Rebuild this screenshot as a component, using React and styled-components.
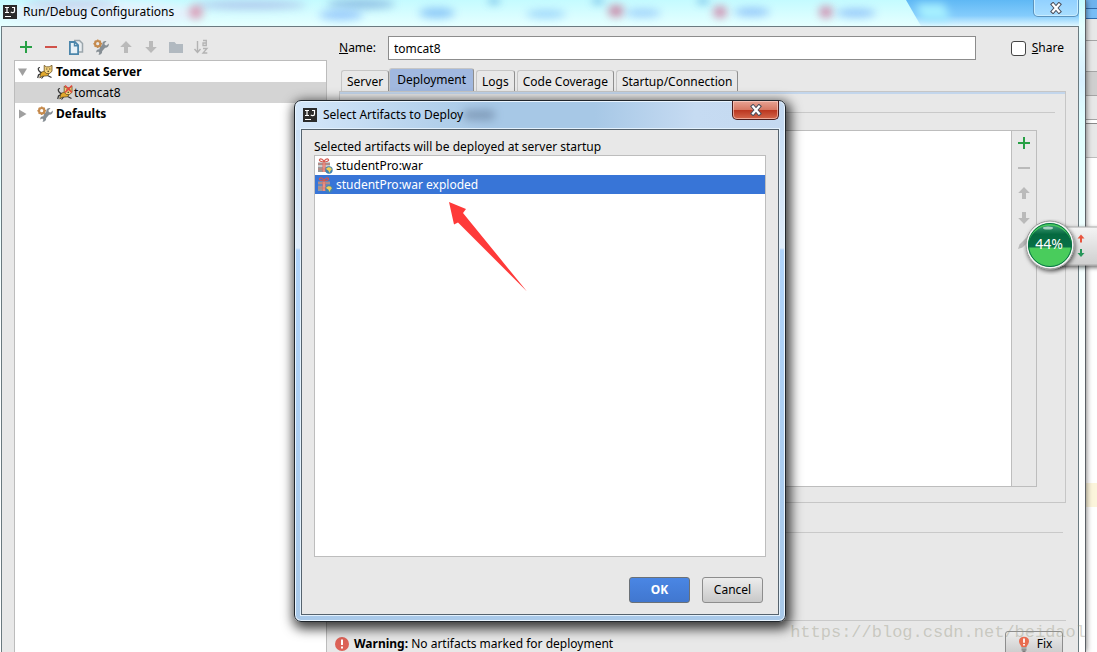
import React from "react";
import styled, { createGlobalStyle } from "styled-components";

const GlobalStyle = createGlobalStyle`
  * { box-sizing: border-box; }
  html, body { margin: 0; height: 100%; }
  #root { height: 100%; }
  body {
    background: #fff;
    color: #000;
    font: 12px/20px "Noto Sans", "Open Sans", sans-serif;
    overflow: hidden;
  }
  button, input { font: inherit; color: inherit; margin: 0; }
  svg { display: block; flex: none; }
  ul { margin: 0; padding: 0; list-style: none; }
`;

/* ---------- desktop and main window ---------- */

const Desktop = styled.div`
  position: relative;
  display: flex;
  height: 100%;
  overflow: hidden;
`;

const MainWindow = styled.div`
  position: relative;
  flex: 1;
  min-width: 0;
  display: flex;
  flex-direction: column;
  padding: 0 6px 0 1px;
  border-right: 1px solid #5c6166;
  background: linear-gradient(#c4fbff 0, #e6ffff 26px, #d8f0ff 80px, #e0ffff 120px, #fbffff 320px, #fff 100%);
  box-shadow: 0 0 6px rgba(0, 0, 0, 0.6);
`;

const BehindWindow = styled.div`
  width: 11px;
  display: flex;
  flex-direction: column;
  background: #fff;
`;

const Band = styled.div`
  height: ${(p) => p.$height}px;
  flex: none;
  background: ${(p) => p.$color};
  border-bottom: 1px solid ${(p) => p.$line || p.$color};
`;

const TitleBar = styled.header`
  position: relative;
  height: 26px;
  flex: none;
  display: flex;
  align-items: flex-start;
  gap: 6px;
  padding: 2px 0 0 2px;
`;

const TitleGlow = styled.svg`
  position: absolute;
  inset: 0;
  width: 100%;
  height: 26px;
`;

const WindowTitle = styled.h1`
  position: relative;
  flex: 1;
  margin: 0;
  font-size: 12px;
  line-height: 20px;
  font-weight: 400;
`;

const LogoSlot = styled.span`
  position: relative;
  padding-top: 3px;
`;

const GlassClose = styled.button`
  position: relative;
  width: 46px;
  height: 18px;
  margin-top: -3px;
  padding: 0;
  display: flex;
  align-items: center;
  justify-content: center;
  border: 1px solid #5c93bd;
  border-top: 0;
  border-radius: 0 0 5px 5px;
  background: linear-gradient(#90d0ff, #a9deff);
  box-shadow: inset 0 0 0 1px #c9edff;
`;

const Client = styled.main`
  flex: 1;
  min-height: 0;
  display: flex;
  border: 1px solid #6b7a80;
  border-bottom: 0;
  background: #e8e8e8;
`;

/* ---------- left column ---------- */

const Sidebar = styled.aside`
  flex: none;
  width: 325px;
  padding: 8px 0 0 12px;
  display: flex;
  flex-direction: column;
  gap: 1px;
`;

const Toolbar = styled.div`
  display: flex;
  flex-direction: ${(p) => (p.$vertical ? "column" : "row")};
  gap: 1px;
`;

const IconButton = styled.button`
  width: 24px;
  height: 24px;
  padding: 0;
  border: 0;
  background: none;
  display: flex;
  align-items: center;
  justify-content: center;
`;

const Tree = styled.ul`
  flex: 1;
  background: #fff;
  border: 1px solid #bcbcbc;
  border-bottom: 0;
`;

const TreeRow = styled.li`
  display: flex;
  align-items: center;
  height: 21px;
  padding-left: ${(p) => (p.$child ? 42 : 2)}px;
  background: ${(p) => (p.$selected ? "#d4d4d4" : "transparent")};
  font-weight: ${(p) => (p.$child ? 400 : 700)};
`;

const Twisty = styled.span`
  width: 20px;
  display: flex;
`;

const TreeLabel = styled.span`
  padding-left: ${(p) => (p.$tight ? 1 : 3)}px;
`;

/* ---------- right column ---------- */

const Editor = styled.section`
  flex: 1;
  min-width: 0;
  display: flex;
  flex-direction: column;
  padding: 9px 12px 0 12px;
`;

const NameRow = styled.div`
  display: flex;
  flex: none;
  align-items: center;
  height: 24px;
  padding-right: 2px;
`;

const NameLabel = styled.label`
  width: 49px;
  flex: none;
`;

const NameInput = styled.input`
  flex: 1;
  min-width: 0;
  height: 24px;
  padding: 0 5px;
  border: 1px solid #8c8c8c;
  background: #fff;
  outline: 0;
  border-radius: 0;
`;

const ShareLabel = styled.label`
  display: flex;
  align-items: center;
  gap: 6px;
  margin-left: 35px;
`;

const Checkbox = styled.input`
  appearance: none;
  width: 15px;
  height: 15px;
  border: 1px solid #444;
  border-radius: 3px;
  background: #fff;
`;

const Tabs = styled.div`
  display: flex;
  flex: none;
  align-items: flex-end;
  gap: 2px;
  height: 31px;
  padding-left: 2px;
`;

const Tab = styled.button`
  height: ${(p) => (p.$active ? 23 : 21)}px;
  padding: ${(p) => (p.$active ? "0 7px" : "2px 5px 0")};
  margin-left: ${(p) => (p.$active ? -2 : 0)}px;
  border: 1px solid #c6c6c6;
  border-bottom: 0;
  border-right: 1px solid #8e8e8e;
  border-radius: 3px 3px 0 0;
  background: ${(p) => (p.$active ? "#a1b8df" : "#e8e8e8")};
  line-height: 18px;
  white-space: nowrap;
`;

const TabPanel = styled.div`
  height: 412px;
  padding: 20px 10px 0 12px;
  border: 1px solid #c6c6c6;
  box-shadow: inset 0 2px 0 #c3d6ec;
  display: flex;
  flex: none;
  flex-direction: column;
  gap: 17px;
`;

const Rule = styled.div`
  height: 1px;
  flex: none;
  background: #c9c9c9;
  margin-top: ${(p) => p.$top || 0}px;
  margin-right: ${(p) => p.$right || 0}px;
`;

const DeployBox = styled.div`
  display: flex;
  height: 357px;
  flex: none;
  margin-right: 18px;
  border: 1px solid #bdbdbd;
`;

const DeployList = styled.div`
  flex: 1;
  background: #fff;
  border-right: 1px solid #bdbdbd;
`;

const StatusRow = styled.footer`
  display: flex;
  flex: none;
  align-items: flex-start;
  gap: 4px;
  padding: 10px 3px 0 0;
`;

const StatusText = styled.span`
  flex: 1;
  line-height: 26px;
`;

const StatusIcon = styled.span`
  padding-top: 5px;
  margin-left: -5px;
`;

const PushButton = styled.button`
  min-width: ${(p) => p.$width || 61}px;
  height: 26px;
  padding: 0;
  display: flex;
  align-items: center;
  justify-content: center;
  gap: 5px;
  border: 1px solid ${(p) => (p.$primary ? "#6b7177" : "#8d8d8d")};
  border-radius: 3px;
  background: ${(p) => (p.$primary ? "linear-gradient(#4a86e4, #4177cf)" : "linear-gradient(#ececec, #c8c8c8)")};
  color: ${(p) => (p.$primary ? "#fff" : "#000")};
  font-weight: ${(p) => (p.$primary ? 700 : 400)};
`;

/* ---------- modal dialog ---------- */

const Dialog = styled.div`
  position: absolute;
  top: 100px;
  left: 294px;
  width: 492px;
  padding: 0 6px 6px;
  border: 1px solid #20262c;
  border-radius: 7px;
  background:
    linear-gradient(90deg, rgba(214, 232, 250, 0.9) 0, #a7c8e6 190px, #a7c8e6 300px, #c6dbf2 400px, #c4d9f0) 0 0 / 100% 29px no-repeat,
    linear-gradient(#c5dcf4 0, #e0edfb 147px, #b0d4fb 149px, #a9c9e9 100%);
  box-shadow: inset 0 0 0 1px #eaf5ff, 2px 4px 12px 3px rgba(0, 0, 0, 0.75);
`;

const DialogTitle = styled.header`
  display: flex;
  align-items: flex-start;
  gap: 6px;
  height: 28px;
  padding: 4px 0 0 2px;
`;

const TitleSmudge = styled.span`
  position: absolute;
  top: 9px;
  left: 168px;
  width: 32px;
  height: 10px;
  border-radius: 5px;
  background: rgba(70, 90, 120, 0.4);
  filter: blur(4px);
`;

const RedClose = styled.button`
  width: 47px;
  height: 19px;
  margin-top: -4px;
  padding: 0;
  display: flex;
  align-items: center;
  justify-content: center;
  border: 1px solid #4b1c1c;
  border-top: 0;
  border-radius: 0 0 5px 5px;
  background: linear-gradient(#e7a394 0, #d77964 48%, #bb3720 52%, #d4674c 100%);
  box-shadow: inset 0 0 0 1px rgba(255, 215, 205, 0.6);
`;

const DialogBody = styled.div`
  padding: 9px 12px 11px;
  border: 1px solid #56636e;
  background: #e8e8e8;
  box-shadow: 0 0 0 1px #e3f1fd;
`;

const DialogHint = styled.p`
  margin: 0;
  line-height: 16px;
`;

const ArtifactList = styled.ul`
  height: 402px;
  border: 1px solid #bdbdbd;
  background: #fff;
`;

const Artifact = styled.li`
  display: flex;
  align-items: center;
  gap: 3px;
  height: 19px;
  padding-left: 2px;
  background: ${(p) => (p.$selected ? "#3875d7" : "transparent")};
  color: ${(p) => (p.$selected ? "#fff" : "#000")};
`;

const DialogActions = styled.div`
  display: flex;
  justify-content: flex-end;
  gap: 12px;
  padding: 20px 3px 0 0;
`;

/* ---------- overlays ---------- */

const PointerArrow = styled.svg`
  position: absolute;
  top: 200px;
  left: 446px;
`;

const SpeedWidget = styled.div`
  position: absolute;
  top: 219px;
  right: 0;
`;

const WidgetText = styled.span`
  position: absolute;
  top: 15px;
  left: 4px;
  width: 44px;
  text-align: center;
  color: #fff;
  font-size: 14px;
`;

const Watermark = styled.div`
  position: absolute;
  top: 622px;
  right: 11px;
  color: rgba(150, 150, 130, 0.4);
  font: 17px/22px "Liberation Mono", monospace;
`;

/* ---------- icons ---------- */

const IdeaLogo = () => (
  <svg width="14" height="14" viewBox="0 0 14 14">
    <rect width="14" height="14" fill="#2b2b2b" />
    <path d="M2 2.500h4M4 2.500v5M2 7.500h4" fill="none" stroke="#fff" strokeWidth="1.200" />
    <path d="M9 2.500h2.500v3.500q0 1.700-1.700 1.700-1.200 0-2-.9" fill="none" stroke="#fff" strokeWidth="1.200" />
    <path d="M2 11.500h6" stroke="#fff" />
  </svg>
);

const Svg16 = ({ children }) => (
  <svg width="16" height="16" viewBox="0 0 16 16">{children}</svg>
);

const PlusIcon = () => (
  <Svg16><path d="M8 2v12M2 8h12" stroke="#27a045" strokeWidth="2" /></Svg16>
);
const MinusIcon = ({ color = "#d0524a" }) => (
  <Svg16><path d="M2 8h12" stroke={color} strokeWidth="2" /></Svg16>
);
const CopyIcon = () => (
  <Svg16>
    <path d="M6 1.500h5.500l3 3V13H11" fill="#e9eef1" stroke="#9aa5ab" strokeWidth="1.500" />
    <path d="M1.900 3h5l3.200 3.200v8.900H1.900z" fill="#e8f1f7" stroke="#4c86ab" strokeWidth="1.800" />
    <path d="M6.500 3v3.700H10" fill="none" stroke="#4c86ab" strokeWidth="1.400" />
  </Svg16>
);
const WrenchIcon = () => (
  <Svg16>
    <path d="M15.800 4.500l-2.300 2-1.700-.5-.3-1.700 2-2.100c-2.300-.7-4.500.8-4.200 3.400L6.600 8.800l-.1 1.500C4.300 10 2.900 11.700 3.300 13.500l1.900-.9 1.200 1.100-.9 2c2.300.4 3.900-1.100 3.600-3.400l3-3.500c2.300.3 4.100-1.700 3.700-4.300z" fill="#868e94" />
    <circle cx="4.700" cy="4.700" r="2.700" fill="none" stroke="#c58a4d" strokeWidth="2.200" />
    <path d="M4.700.4v1.400M4.700 7.600V9M.4 4.700h1.300M7.700 4.700H9M1.700 1.700l1 1M6.700 6.700l1 1M1.700 7.700l1-1M6.700 2.700l1-1" stroke="#c58a4d" strokeWidth="1.500" />
  </Svg16>
);
const UpIcon = () => (
  <Svg16><path d="M8 2l5.800 6H10v6H6V8H2.200z" fill="#bababa" /></Svg16>
);
const DownIcon = () => (
  <Svg16><path d="M8 14L2.200 8H6V2h4v6h3.800z" fill="#bababa" /></Svg16>
);
const FolderIcon = () => (
  <Svg16><path d="M1 3h5.500l1.800 2H15v9H1z" fill="#b1b9c0" /></Svg16>
);
const SortIcon = () => (
  <Svg16>
    <path d="M4.500 2v11M1.500 10l3 3.500 3-3.500" fill="none" stroke="#b3b3b3" strokeWidth="1.400" />
    <path d="M10 1.500h3.300v5H10V4h3.300M10 9.500h4l-4 4.500h4.300" fill="none" stroke="#b3b3b3" strokeWidth="1.300" />
  </Svg16>
);
const PencilIcon = () => (
  <Svg16><path d="M2 14l1.500-4.500L11 2l3 3-7.500 7.500z" fill="#bababa" /></Svg16>
);
const TriangleIcon = ({ open }) => (
  <svg width="12" height="12" viewBox="0 0 12 12">
    <path d={open ? "M1 2.500h9L5.500 10z" : "M2 1.500v9L9.500 6z"} fill="#a0a0a0" />
  </svg>
);
const TomcatIcon = ({ broken }) => (
  <Svg16>
    <path d="M2.500 7.500C.8 5.500.6 3.700 3 3.500M2.500 7.500c.6.700 1.500 1 2.500 1M4 9.500L1.500 11l-.8 3M6.500 12L4.500 14.500M10.500 11.500l4 2" fill="none" stroke="#333" strokeWidth="1.200" />
    <path d="M4 8.800c1.700-1.600 3.500-1.500 4.500-2l3.500 3-1.500 2L5 12.300 2.800 14l.4-3z" fill="#e2a92d" stroke="#4b3b18" strokeWidth=".7" />
    <path d="M7.200 1.300l2 1.500h3l2.800-1.500v6l-2.500 2.200H9.300L7.200 7.300z" fill="#f2d07a" stroke="#6b5222" strokeWidth=".8" />
    <path d="M9.300 5h1M12.300 5h1M10.500 7.300h1.500" stroke="#352810" strokeWidth="1.100" />
    {broken && <path d="M8 .5l7 7M15 .5l-7 7" stroke="#e5483f" strokeWidth="1.500" />}
  </Svg16>
);
const GiftIcon = () => (
  <Svg16>
    <path d="M7 4C4.500 4 1.800 3 2.600 1.500 3.700-.1 6.500 1.500 7 4c.5-2.500 3.300-4.100 4.400-2.500C12.200 3 9.500 4 7 4z" fill="none" stroke="#d5584e" strokeWidth="1.200" />
    <path d="M1 4.500h12v3H1zM1 8.500h12V14H1z" fill="#969a9d" />
    <path d="M5.500 4.500h3V14h-3z" fill="#e06a5d" />
    <path d="M6.500 5h1v9h-1z" fill="#f5b3a9" />
    <path d="M1 6h12M1 11h12" stroke="#d9766b" strokeWidth=".8" />
    <circle cx="12" cy="12" r="3.700" fill="#3f83b2" />
    <path d="M9 11c1-2 3.500-2.400 5-1.200l.8 1.800-1.300 1.200-.9 2.200-1.400-2.500z" fill="#f0cf58" />
  </Svg16>
);
const CloseGlyph = () => (
  <svg width="14" height="12" viewBox="0 0 14 12">
    <path d="M4 2.500l6 7M10 2.500l-6 7" stroke="#4b4f5c" strokeWidth="4.200" strokeLinecap="square" />
    <path d="M4 2.500l6 7M10 2.500l-6 7" stroke="#fff" strokeWidth="2.200" strokeLinecap="square" />
  </svg>
);
const ErrorIcon = () => (
  <Svg16>
    <circle cx="8" cy="8" r="7" fill="#dc6257" />
    <path d="M8 3.500v5.500M8 10.500v2" stroke="#fff" strokeWidth="2" />
  </Svg16>
);
const BulbIcon = () => (
  <Svg16>
    <path d="M5.500 11C5 9 3 8 3 5.200 3 2.400 5 .8 8 .8s5 1.600 5 4.400C13 8 11 9 10.500 11z" fill="#e86c50" />
    <path d="M8 2.500v4.300M8 8v1.500" stroke="#fff" strokeWidth="1.800" />
    <path d="M5.500 12h5M5.500 13.800h5M6.500 15.300h3" stroke="#7c7c7c" strokeWidth="1.200" />
  </Svg16>
);

const TITLE_SPOTS = [
  [250, 5, 55, 4, "#a9bbe8"], [70, 4, 46, 4, "#bccbea"], [195, 12, 7, 7, "#dc8aa8"],
  [360, 4, 34, 5, "#86b6e0"], [340, 15, 22, 5, "#8cc0fb"], [436, 13, 18, 5, "#7cbcf6"],
  [545, 14, 20, 4, "#90cdfa"], [615, 11, 8, 6, "#c87598"], [642, 13, 18, 4, "#93c7fa"],
  [719, 12, 7, 6, "#cf7ba2"], [751, 12, 18, 4, "#82b8f8"], [825, 12, 7, 6, "#cf7ba2"],
  [855, 13, 20, 4, "#82b8f8"], [493, 1, 6, 3, "#5ba9e0"], [597, 1, 6, 3, "#5ba9e0"], [702, 1, 6, 3, "#5ba9e0"],
];

const SIDEBAR_TOOLS = [
  ["Add", <PlusIcon />], ["Remove", <MinusIcon />], ["Copy", <CopyIcon />], ["Edit defaults", <WrenchIcon />],
  ["Move up", <UpIcon />], ["Move down", <DownIcon />], ["New folder", <FolderIcon />], ["Sort", <SortIcon />],
];
const DEPLOY_TOOLS = [
  ["Add artifact", <PlusIcon />], ["Remove artifact", <MinusIcon color="#bababa" />], ["Artifact up", <UpIcon />],
  ["Artifact down", <DownIcon />], ["Edit artifact", <PencilIcon />],
];
const TABS = ["Server", "Deployment", "Logs", "Code Coverage", "Startup/Connection"];

const ToolButtons = ({ items }) =>
  items.map(([label, icon]) => (
    <IconButton key={label} type="button" aria-label={label}>{icon}</IconButton>
  ));

export default function App() {
  return (
    <Desktop>
      <GlobalStyle />
      <MainWindow>
        <TitleBar>
          <TitleGlow aria-hidden="true">
            <defs>
              <filter id="soft" x="-100%" y="-200%" width="300%" height="500%"><feGaussianBlur stdDeviation="4" /></filter>
              <linearGradient id="sky" x2="0" y2="1">
                <stop offset="0" stopColor="#5fb8f4" /><stop offset=".6" stopColor="#84ccfc" /><stop offset="1" stopColor="#dff7ff" />
              </linearGradient>
            </defs>
            <path d="M905 0H1100V26H920z" fill="url(#sky)" />
            <path d="M915 4h28l6 16h-28z" fill="#a6f0ff" filter="url(#soft)" />
            <ellipse cx="100" cy="14" rx="95" ry="12" fill="#e5f2fd" filter="url(#soft)" />
            {TITLE_SPOTS.map(([cx, cy, rx, ry, fill]) => (
              <ellipse key={cx} cx={cx} cy={cy} rx={rx} ry={ry} fill={fill} opacity=".85" filter="url(#soft)" />
            ))}
          </TitleGlow>
          <LogoSlot><IdeaLogo /></LogoSlot>
          <WindowTitle>Run/Debug Configurations</WindowTitle>
          <GlassClose type="button" aria-label="Close window"><CloseGlyph /></GlassClose>
        </TitleBar>
        <Client>
          <Sidebar>
            <Toolbar><ToolButtons items={SIDEBAR_TOOLS} /></Toolbar>
            <Tree>
              <TreeRow>
                <Twisty><TriangleIcon open /></Twisty><TomcatIcon /><TreeLabel>Tomcat Server</TreeLabel>
              </TreeRow>
              <TreeRow $child $selected>
                <TomcatIcon broken /><TreeLabel $tight>tomcat8</TreeLabel>
              </TreeRow>
              <TreeRow>
                <Twisty><TriangleIcon /></Twisty><WrenchIcon /><TreeLabel>Defaults</TreeLabel>
              </TreeRow>
            </Tree>
          </Sidebar>
          <Editor>
            <NameRow>
              <NameLabel htmlFor="name"><u>N</u>ame:</NameLabel>
              <NameInput id="name" defaultValue="tomcat8" />
              <ShareLabel><Checkbox type="checkbox" /><span><u>S</u>hare</span></ShareLabel>
            </NameRow>
            <Tabs role="tablist">
              {TABS.map((tab) => (
                <Tab key={tab} type="button" role="tab" $active={tab === "Deployment"} aria-selected={tab === "Deployment"}>{tab}</Tab>
              ))}
            </Tabs>
            <TabPanel>
              <Rule />
              <DeployBox>
                <DeployList />
                <Toolbar $vertical><ToolButtons items={DEPLOY_TOOLS} /></Toolbar>
              </DeployBox>
            </TabPanel>
            <Rule $top={29} $right={3} />
            <Rule $top={87} />
            <StatusRow>
              <StatusIcon><ErrorIcon /></StatusIcon>
              <StatusText><b>Warning:</b> No artifacts marked for deployment</StatusText>
              <PushButton type="button" $width={58}><BulbIcon />Fix</PushButton>
            </StatusRow>
          </Editor>
        </Client>
      </MainWindow>
      <BehindWindow>
        <Band $height={9} $color="#6fb3ee" $line="#2f6cae" />
        <Band $height={10} $color="#78bdf6" $line="#2f6cae" />
        <Band $height={22} $color="#e8e8e8" $line="#a5a5a5" />
        <Band $height={31} $color="#e8e8e8" $line="#a5a5a5" />
        <Band $height={24} $color="#cfcfcf" $line="#a5a5a5" />
        <Band $height={24} $color="#e8e8e8" $line="#a5a5a5" />
        <Band $height={4} $color="#fff" $line="#8a8a8a" />
        <Band $height={34} $color="#e8e8e8" $line="#bdbdbd" />
        <Band $height={325} $color="#fff" />
        <Band $height={24} $color="#fcf5dc" />
      </BehindWindow>

      <Watermark>https://blog.csdn.net/beidaol</Watermark>

      <Dialog role="dialog" aria-label="Select Artifacts to Deploy">
        <TitleSmudge />
        <DialogTitle>
          <LogoSlot><IdeaLogo /></LogoSlot>
          <WindowTitle as="h2">Select Artifacts to Deploy</WindowTitle>
          <RedClose type="button" aria-label="Close dialog"><CloseGlyph /></RedClose>
        </DialogTitle>
        <DialogBody>
          <DialogHint>Selected artifacts will be deployed at server startup</DialogHint>
          <ArtifactList>
            <Artifact><GiftIcon />studentPro:war</Artifact>
            <Artifact $selected><GiftIcon />studentPro:war exploded</Artifact>
          </ArtifactList>
          <DialogActions>
            <PushButton type="button" $primary>OK</PushButton>
            <PushButton type="button">Cancel</PushButton>
          </DialogActions>
        </DialogBody>
      </Dialog>

      <PointerArrow width="84" height="94" viewBox="0 0 84 94" aria-hidden="true">
        <path d="M3 2L20 9l-3 4L81 91.500 12 22.500 8 24.500z" fill="#fe3a39" />
      </PointerArrow>

      <SpeedWidget>
        <svg width="74" height="56" viewBox="0 0 74 56">
          <defs>
            <linearGradient id="bar" x2="0" y2="1"><stop offset="0" stopColor="#f4f4f4" /><stop offset="1" stopColor="#cfcfcf" /></linearGradient>
            <linearGradient id="dark" x2="0" y2="1"><stop offset="0" stopColor="#3d9a76" /><stop offset=".4" stopColor="#05693f" /><stop offset="1" stopColor="#087047" /></linearGradient>
            <filter id="drop" x="-20%" y="-20%" width="150%" height="150%"><feDropShadow dx="1" dy="2" stdDeviation="2" floodOpacity=".6" /></filter>
          </defs>
          <rect x="27" y="8" width="50" height="38" fill="url(#bar)" stroke="#aaa" filter="url(#drop)" />
          <circle cx="27" cy="26" r="24" fill="#f4f4f4" stroke="#999" filter="url(#drop)" />
          <circle cx="27" cy="26" r="22" fill="#49cc5c" />
          <path d="M5 28.500a22 22 0 1 1 44 0z" fill="url(#dark)" />
          <circle cx="27" cy="26" r="21.500" fill="none" stroke="#087047" />
          <ellipse cx="25" cy="9" rx="5" ry="1.500" fill="#fff" opacity=".6" />
          <path d="M58 15.500l3.500 4h-2.500v4h-2v-4h-2.500z" fill="#e8553f" />
          <path d="M58 38l-3.500-4h2.500v-4h2v4h2.500z" fill="#27965a" />
        </svg>
        <WidgetText>44%</WidgetText>
      </SpeedWidget>
    </Desktop>
  );
}
